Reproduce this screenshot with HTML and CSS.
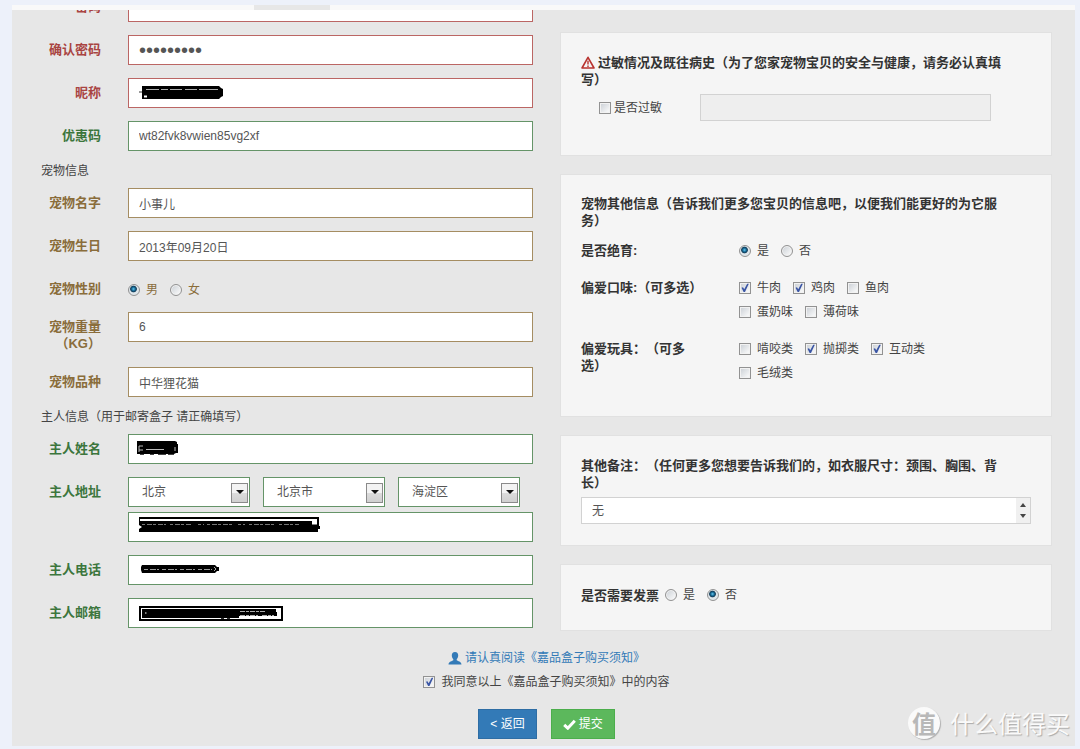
FILE: index.html
```html
<!DOCTYPE html>
<html lang="zh-CN">
<head>
<meta charset="utf-8">
<title>嘉品盒子</title>
<link rel="stylesheet" href="styles.css">
</head>
<body>
<nav class="nav-strip"><span class="nav-tab"></span></nav>
<form class="sheet">
  <div class="columns">
    <div class="fields">
      <div class="row error">
        <label class="row-label" for="pwd">密码</label>
        <div class="control"><input class="text" id="pwd" type="password"></div>
      </div>
      <div class="row error">
        <label class="row-label" for="pwd2">确认密码</label>
        <div class="control"><input class="text password" id="pwd2" type="password" value="123456789"></div>
      </div>
      <div class="row error">
        <label class="row-label" for="nick">昵称</label>
        <div class="control"><input class="text" id="nick" type="text">
          <svg class="ink" width="200" height="30" viewBox="0 0 200 30" aria-hidden="true"><path d="M14 8H91L93 10 95 11V18L93 19 91 21H14Z"/><path d="M11 14H14" stroke="#333"/><path d="M18 11.5H31M33 11.5H40M42 11.5H54M57 11.5H69M71 11.5H90" stroke="#aaa"/><path d="M16 18.500H19" stroke="#fff" stroke-width="2"/></svg>
        </div>
      </div>
      <div class="row success">
        <label class="row-label" for="code">优惠码</label>
        <div class="control"><input class="text" id="code" type="text" value="wt82fvk8vwien85vg2xf"></div>
      </div>

      <h2 class="section">宠物信息</h2>
      <div class="row warning">
        <label class="row-label" for="pet">宠物名字</label>
        <div class="control"><input class="text" id="pet" type="text" value="小事儿"></div>
      </div>
      <div class="row warning">
        <label class="row-label" for="birth">宠物生日</label>
        <div class="control"><input class="text" id="birth" type="text" value="2013年09月20日"></div>
      </div>
      <div class="row warning" role="radiogroup" aria-labelledby="sex">
        <span class="row-label" id="sex">宠物性别</span>
        <div class="control options sex">
          <label class="option"><input class="radio" type="radio" name="sex" checked>男</label>
          <label class="option"><input class="radio" type="radio" name="sex">女</label>
        </div>
      </div>
      <div class="row warning">
        <label class="row-label" for="weight">宠物重量（KG）</label>
        <div class="control"><input class="text" id="weight" type="text" value="6"></div>
      </div>
      <div class="row warning">
        <label class="row-label" for="breed">宠物品种</label>
        <div class="control"><input class="text" id="breed" type="text" value="中华狸花猫"></div>
      </div>

      <h2 class="section">主人信息（用于邮寄盒子 请正确填写）</h2>
      <div class="row success">
        <label class="row-label" for="owner">主人姓名</label>
        <div class="control"><input class="text" id="owner" type="text">
          <svg class="ink" width="200" height="30" viewBox="0 0 200 30" aria-hidden="true"><path d="M9 7H47L49 8V10H50V19H48L46 20H9Z"/><path d="M11 12H15M11 16H15M11 12V18M18 15.500H36M47 13V17" stroke="#bbb" fill="none"/><path d="M12 20.500H16M22 20.500H26M30 20.500H38M40 20.500H46" stroke="#444"/></svg>
        </div>
      </div>
      <div class="row success">
        <label class="row-label" for="province">主人地址</label>
        <div class="control address">
          <div class="selects">
            <span class="select-box"><select class="select" id="province"><option>北京</option></select></span>
            <span class="select-box"><select class="select" aria-label="城市"><option>北京市</option></select></span>
            <span class="select-box"><select class="select" aria-label="区县"><option>海淀区</option></select></span>
          </div>
          <div class="control"><input class="text" type="text" aria-label="详细地址">
            <svg class="ink" width="200" height="30" viewBox="0 0 200 30" aria-hidden="true"><path d="M11 5H191V14H192V17H190V20H11V17L14 15 11 13Z"/><path d="M12 7H189V12.500H184V9H12Z" fill="#fff"/><path d="M14 12.500H38M42 12.500H63M70 12.500H76M79 12.500H104M110 12.500H117M121 12.500H147M151 12.500H171" stroke="#777" stroke-dasharray="3 2 5 1"/></svg>
          </div>
        </div>
      </div>
      <div class="row success">
        <label class="row-label" for="phone">主人电话</label>
        <div class="control"><input class="text" id="phone" type="text">
          <svg class="ink" width="200" height="30" viewBox="0 0 200 30" aria-hidden="true"><path d="M14 10H87L89 12H91V16H89L87 18H14L13 15V12Z"/><path d="M16 14.500H84" stroke="#999" stroke-dasharray="4 2 6 1 2 3"/><path d="M86 12L88 14 86 16" stroke="#aaa" fill="none"/></svg>
        </div>
      </div>
      <div class="row success">
        <label class="row-label" for="mail">主人邮箱</label>
        <div class="control"><input class="text" id="mail" type="text">
          <svg class="ink" width="200" height="30" viewBox="0 0 200 30" aria-hidden="true"><path d="M12 9H154V22H12Z" fill="#fff" stroke="#000" stroke-width="2"/><path d="M14 11H148V14H149V18H111V20H14Z"/><path d="M112 13.500H138M112 17.500H130M134 17.500H146" stroke="#aaa" stroke-dasharray="5 1 3 1"/><path d="M17 15H18.500" stroke="#fff"/><path d="M93 20.500H96M99 20.500H102" stroke="#333"/></svg>
        </div>
      </div>
    </div>

    <div class="panels">
      <section class="panel allergy">
        <h3 class="panel-title"><svg class="warn" width="14" height="13" viewBox="0 0 14 13" aria-hidden="true"><path d="M7 1.300L13 12H1Z" fill="none" stroke="#b8332f" stroke-width="1.600" stroke-linejoin="round"/><path d="M7 4.800V8.500M7 9.500V11" stroke="#b8332f" stroke-width="1.400"/></svg>过敏情况及既往病史（为了您家宠物宝贝的安全与健康，请务必认真填写）</h3>
        <div class="allergy-row">
          <label class="option tight"><input class="check" type="checkbox">是否过敏</label>
          <input class="text disabled" type="text" aria-label="过敏情况" disabled>
        </div>
      </section>

      <section class="panel other">
        <h3 class="panel-title">宠物其他信息（告诉我们更多您宝贝的信息吧，以便我们能更好的为它服务）</h3>
        <div class="choice-row" role="radiogroup" aria-labelledby="spay">
          <span class="choice-label" id="spay">是否绝育:</span>
          <div class="options">
            <label class="option"><input class="radio" type="radio" name="spay" checked>是</label>
            <label class="option"><input class="radio" type="radio" name="spay">否</label>
          </div>
        </div>
        <div class="choice-row" role="group" aria-labelledby="taste">
          <span class="choice-label" id="taste">偏爱口味:（可多选）</span>
          <div class="options">
            <label class="option"><input class="check" type="checkbox" checked>牛肉</label>
            <label class="option"><input class="check" type="checkbox" checked>鸡肉</label>
            <label class="option"><input class="check" type="checkbox">鱼肉</label>
            <label class="option"><input class="check" type="checkbox">蛋奶味</label>
            <label class="option"><input class="check" type="checkbox">薄荷味</label>
          </div>
        </div>
        <div class="choice-row" role="group" aria-labelledby="toy">
          <span class="choice-label" id="toy">偏爱玩具：（可多选）</span>
          <div class="options">
            <label class="option"><input class="check" type="checkbox">啃咬类</label>
            <label class="option"><input class="check" type="checkbox" checked>抛掷类</label>
            <label class="option"><input class="check" type="checkbox" checked>互动类</label>
            <label class="option"><input class="check" type="checkbox">毛绒类</label>
          </div>
        </div>
      </section>

      <section class="panel">
        <h3 class="panel-title"><label for="note">其他备注：（任何更多您想要告诉我们的，如衣服尺寸：颈围、胸围、背长）</label></h3>
        <div class="note-box">
          <textarea class="note" id="note" rows="1">无</textarea>
          <span class="scroller" aria-hidden="true"><svg width="6" height="4" viewBox="0 0 6 4"><path d="M0 4L3 0 6 4Z"/></svg><svg width="6" height="4" viewBox="0 0 6 4"><path d="M0 0L3 4 6 0Z"/></svg></span>
        </div>
      </section>

      <section class="panel invoice" role="radiogroup" aria-labelledby="invoice">
        <span class="choice-label" id="invoice">是否需要发票</span>
        <label class="option"><input class="radio" type="radio" name="invoice">是</label>
        <label class="option"><input class="radio" type="radio" name="invoice" checked>否</label>
      </section>
    </div>
  </div>

  <footer class="finish">
    <a class="terms" href="#"><svg width="14" height="13" viewBox="0 0 14 13" aria-hidden="true"><path d="M7 0C9.200 0 10.300 1.500 10.200 3.600C10.100 5.200 9.500 6.500 8.700 7.200V8.300C9.500 9.200 13.500 9.500 13.500 12.500H.5C.5 9.500 4.500 9.200 5.300 8.300V7.200C4.500 6.500 3.900 5.200 3.800 3.600C3.700 1.500 4.800 0 7 0Z" fill="#337ab7"/></svg>请认真阅读《嘉品盒子购买须知》</a>
    <label class="option agree"><input class="check" type="checkbox" checked>我同意以上《嘉品盒子购买须知》中的内容</label>
    <div class="buttons">
      <button class="btn back" type="button">&lt; 返回</button>
      <button class="btn submit" type="submit"><svg width="13" height="11" viewBox="0 0 13 11" aria-hidden="true"><path d="M1.200 5.800L4.800 9.200 11.800 1.800" fill="none" stroke="#fff" stroke-width="3"/></svg>提交</button>
    </div>
  </footer>
</form>
<div class="watermark"><span class="seal">值</span>什么值得买</div>
</body>
</html>
```

FILE: styles.css
```css
* { box-sizing: border-box; }

body {
  margin: 0;
  padding: 5px 5px 3px 12px;
  background: #edf1fa;
  color: #444;
  font: 12px/18px "Liberation Sans", "Noto Sans CJK SC", sans-serif;
  text-spacing-trim: space-all;
  position: relative;
}

input, select, textarea, button { font: inherit; color: inherit; margin: 0; }

.nav-strip { display: flex; height: 5px; padding-left: 242px; background: #f9f9f9; }
.nav-tab { width: 76px; background: #e7e7e7; }

.sheet {
  padding: 0 23px 7px 29px;
  background: #e7e7e7;
  overflow: hidden;
}

.columns { display: grid; grid-template-columns: 1fr 1fr; gap: 27px; }

/* left column */
.fields { margin-top: -18px; }
.row {
  display: grid;
  grid-template-columns: 60px 1fr;
  column-gap: 27px;
  margin-bottom: 13px;
}
.row-label {
  padding: 6px 0 2px;
  font-size: 13px;
  font-weight: bold;
  line-height: 17px;
  text-align: right;
}
.error { color: #a94442; --line: #bb6664; }
.success { color: #3c763d; --line: #659468; }
.warning { color: #8a6d3b; --line: #a58d62; }

.control { position: relative; }
.text {
  display: block;
  width: 100%;
  height: 30px;
  padding: 0 10px;
  border: 1px solid var(--line);
  border-radius: 0;
  background: #fff;
  color: #555;
}
.password { font-family: "Liberation Sans", sans-serif; font-size: 20px; }
.ink { position: absolute; left: 0; top: 0; }

.section { margin: 0 0 10px; font-size: 12px; font-weight: normal; line-height: 14px; }

.address { display: grid; gap: 5px; }
.selects { display: grid; grid-template-columns: repeat(3, 1fr); gap: 13px; padding-right: 13px; }
.select-box { position: relative; display: block; }
.select {
  appearance: none;
  display: block;
  width: 100%;
  height: 30px;
  padding: 0 13px;
  border: 1px solid var(--line);
  border-radius: 0;
  background: #fff;
  color: #555;
}
.select-box::before {
  content: "";
  position: absolute;
  right: 2px;
  top: 6px;
  width: 15px;
  height: 18px;
  border: 1px solid #8a8a8a;
  background: linear-gradient(#f3f3f3 50%, #dcdcdc 50%, #d0d0d0);
  pointer-events: none;
}
.select-box::after {
  content: "";
  position: absolute;
  right: 6px;
  top: 13px;
  border: solid transparent;
  border-width: 4px 4px 0;
  border-top-color: #111;
  pointer-events: none;
}

/* tick boxes and radios */
.options { display: flex; flex-wrap: wrap; column-gap: 12px; }
.option { display: inline-flex; align-items: center; gap: 6px; line-height: 24px; }
.tight { gap: 3px; }
.sex { padding-top: 7px; }
.sex .option { line-height: 18px; }
.check, .radio {
  appearance: none;
  flex: none;
  width: 12px;
  height: 12px;
  border: 1px solid #929292;
  background: linear-gradient(135deg, #c9ced4, #f4f5f6 80%);
  box-shadow: inset 0 0 0 1px #f2f2f2;
}
.check:checked::before {
  content: "";
  display: block;
  width: 10px;
  height: 10px;
  background: #3a55a4;
  clip-path: polygon(15% 48%, 30% 42%, 42% 62%, 72% 8%, 88% 8%, 50% 90%, 36% 90%);
}
.radio { border-radius: 50%; }
.radio:checked {
  background: radial-gradient(circle at 45% 40%, #6cc8ee 0, #19729f 20%, #123a56 36%, #dfe6ea 46%);
  box-shadow: none;
}

/* right column */
.panels { display: flex; flex-direction: column; gap: 18px; padding-top: 22px; }
.panel { padding: 21px 20px; border: 1px solid #e1e1e1; background: #f5f5f5; }
.allergy { padding-bottom: 34px; }
.other { padding: 20px 20px 31px; }
.panel-title, .choice-label { color: #333; font-size: 13px; font-weight: bold; line-height: 17px; }
.panel-title { margin: 0 0 6px; padding-right: 24px; }
.other .panel-title { margin-bottom: 10px; }
.warn { margin-right: 3px; vertical-align: -2px; }

.allergy-row {
  display: grid;
  grid-template-columns: 101px 1fr;
  padding: 0 40px 0 18px;
}
.disabled { --line: #d2d2d2; height: 27px; background: #eee; }

.choice-row { display: grid; grid-template-columns: 124px 205px; gap: 34px; }
.choice-row + .choice-row { margin-top: 13px; }
.choice-row .choice-label { padding-top: 3px; }

.note-box { display: flex; height: 27px; border: 1px solid #d2d2d2; background: #fff; }
.note {
  flex: 1;
  height: 25px;
  padding: 4px 10px;
  border: 0;
  background: none;
  color: #555;
  resize: none;
  overflow: hidden;
}
.scroller {
  display: flex;
  flex-direction: column;
  align-items: center;
  justify-content: space-between;
  width: 14px;
  padding: 5px 0;
  background: #f0f0f0;
  fill: #444;
}

.invoice { display: flex; align-items: center; padding-top: 18px; padding-bottom: 23px; }
.invoice .option { margin: 0 12px 0 0; }
.invoice .choice-label { margin-right: 6px; }

/* bottom */
.finish { display: flex; flex-direction: column; align-items: center; padding-top: 8px; }
.terms { display: flex; align-items: center; gap: 3px; color: #337ab7; text-decoration: none; }
.agree { margin-top: 3px; }
.buttons { display: flex; gap: 14px; margin-top: 15px; }
.btn {
  display: flex;
  align-items: center;
  gap: 3px;
  height: 30px;
  padding: 0 11px;
  border: 1px solid;
  color: #fff;
}
.back { border-color: #2e6da4; background: #337ab7; }
.submit { border-color: #4cae4c; background: #5cb85c; }

/* site mark in the corner */
.watermark {
  position: absolute;
  right: 10px;
  bottom: 10px;
  display: flex;
  align-items: center;
  gap: 10px;
  color: #fafafa;
  font: 24px/32px "Noto Sans CJK SC", sans-serif;
  text-shadow: 1px 1px 1px #aaa;
  pointer-events: none;
}
.seal {
  width: 32px;
  height: 32px;
  border-radius: 50%;
  background: #fafafa;
  box-shadow: 1px 1px 1px #b0b0b0;
  color: #b8b8b8;
  font-weight: bold;
  text-align: center;
  text-shadow: none;
}
```
